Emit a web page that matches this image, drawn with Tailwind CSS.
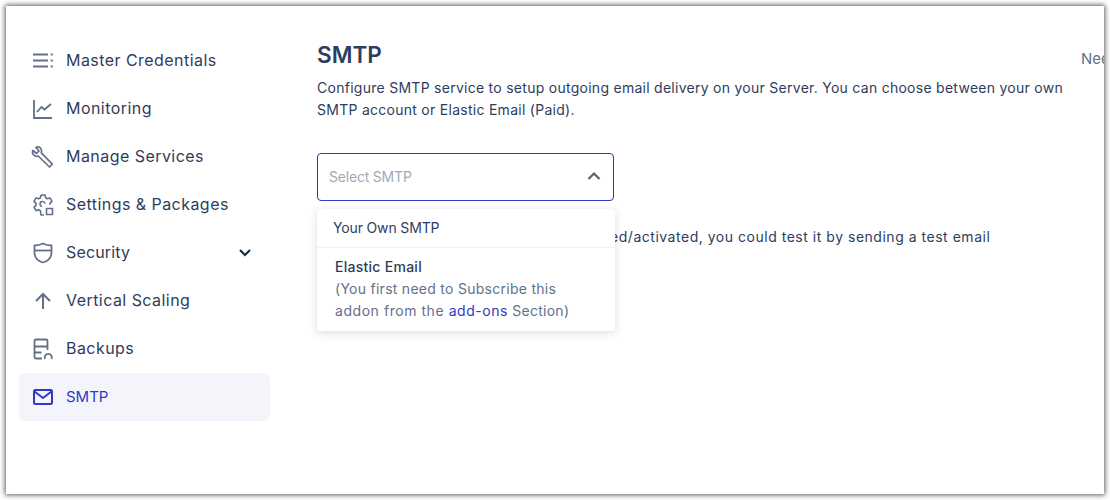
<!DOCTYPE html>
<html lang="en">
<head>
  <meta charset="UTF-8" />
  <meta name="viewport" content="width=device-width, initial-scale=1.0" />
  <title>SMTP</title>
  <script src="https://cdn.jsdelivr.net/npm/@tailwindcss/browser@4"></script>
</head>
<body class="bg-white font-['Inter',sans-serif]">
  <div class="h-[500px] w-[1110px] p-[6px]">
    <div class="flex h-[488px] w-[1098px] overflow-hidden bg-white shadow-[0_0_5px_1px_rgba(0,0,0,0.65)]">

      <!-- sidebar -->
      <nav class="w-[264px] shrink-0 pl-[13px] pt-[31px] text-[16px] tracking-[0.45px] text-[#2e3d5c]">
        <a class="flex h-12 w-[251px] items-center rounded-md pl-[12px]">
          <svg class="mr-[11px] h-[24px] w-[24px] shrink-0 text-[#64708a]" viewBox="0 0 24 24" fill="none" stroke="currentColor" stroke-width="2"><path d="M2 5.500h15M2 11.500h15M2 17.500h15" /><path d="M20.700 4.500v2M20.700 10.500v2M20.700 16.500v2" /></svg>
          <span class="pb-[2px]">Master Credentials</span>
        </a>
        <a class="flex h-12 w-[251px] items-center rounded-md pl-[12px]">
          <svg class="mr-[11px] h-[24px] w-[24px] shrink-0 text-[#64708a]" viewBox="0 0 24 24" fill="none" stroke="currentColor" stroke-width="1.800"><path d="M3 3v18h18" /><path d="M6 15l4.500-5 3 2.500L20 7" /></svg>
          <span class="pb-[2px]">Monitoring</span>
        </a>
        <a class="flex h-12 w-[251px] items-center rounded-md pl-[12px]">
          <svg class="mr-[11px] h-[24px] w-[24px] shrink-0 text-[#64708a]" viewBox="0 0 24 24" fill="none" stroke="currentColor" stroke-width="1.700" stroke-linejoin="round"><path d="M9 2.500c-1.500-.800-3-.800-4 0l3 3.500-2.500 2.500L2 5.500c-.800 1.500-.500 3.300.700 4.500 1.200 1.200 3 1.500 4.500 1l11.300 11 2.800-2.800-11-11.300c.500-1.800.100-4-1.300-5.400z" /></svg>
          <span class="pb-[2px]">Manage Services</span>
        </a>
        <a class="flex h-12 w-[251px] items-center rounded-md pl-[12px]">
          <svg class="mr-[11px] h-[24px] w-[24px] shrink-0 text-[#64708a]" viewBox="0 0 24 24" fill="none" stroke="currentColor" stroke-width="1.600" stroke-linejoin="round"><path d="M11 13.500a2.500 2.500 0 1 1 3-3M10 2h4l.600 2.800 1.700 1 2.700-.900 2 3.500-2 1.800v1.500M10 2l-.600 2.800-1.700 1-2.700-.900-2 3.500 2 1.900v2l-2 1.900 2 3.500 2.700-.900 1.700 1L10 22h3" /><rect x="15.500" y="15.500" width="6" height="6" /></svg>
          <span class="pb-[2px]">Settings &amp; Packages</span>
        </a>
        <a class="flex h-12 w-[251px] items-center rounded-md pl-[12px] tracking-[0.15px]">
          <svg class="mr-[11px] h-[24px] w-[24px] shrink-0 text-[#64708a]" viewBox="0 0 24 24" fill="none" stroke="currentColor" stroke-width="1.800" stroke-linejoin="round"><path d="M12 2.500c3 1.600 5.500 2 8.500 2v7c0 5-3.500 8.500-8.500 10-5-1.500-8.500-5-8.500-10v-7c3 0 5.500-.400 8.500-2z" /><path d="M3.500 9.500h17" /></svg>
          <span class="pb-[2px]">Security</span>
          <svg class="ml-auto mr-[16px] h-[18px] w-[18px] text-[#1f2d4a]" viewBox="0 0 18 18" fill="none" stroke="currentColor" stroke-width="2.200"><path d="M4 6l5 5 5-5" /></svg>
        </a>
        <a class="flex h-12 w-[251px] items-center rounded-md pl-[12px]">
          <svg class="mr-[11px] h-[24px] w-[24px] shrink-0 text-[#64708a]" viewBox="0 0 24 24" fill="none" stroke="currentColor" stroke-width="2"><path d="M12 20V5M5 12l7-7 7 7" /></svg>
          <span class="pb-[2px]">Vertical Scaling</span>
        </a>
        <a class="flex h-12 w-[251px] items-center rounded-md pl-[12px]">
          <svg class="mr-[11px] h-[24px] w-[24px] shrink-0 text-[#64708a]" viewBox="0 0 24 24" fill="none" stroke="currentColor" stroke-width="1.800" stroke-linejoin="round"><path d="M11 21.500H5a1.500 1.500 0 0 1-1.500-1.500V4A1.500 1.500 0 0 1 5 2.500h10A1.500 1.500 0 0 1 16.500 4v9" /><path d="M3.500 9.500h13M3.500 15.500h7" /><path d="M14 22a3.600 3.600 0 1 1 6.500 0" /></svg>
          <span class="pb-[2px]">Backups</span>
        </a>
        <a class="flex h-12 w-[251px] items-center rounded-md bg-[#f4f5fb] pl-[12px] text-[15px] tracking-normal text-[#3038c4]">
          <svg class="mr-[11px] h-[24px] w-[24px] shrink-0" viewBox="0 0 24 24" fill="none" stroke="currentColor" stroke-width="2" stroke-linejoin="round"><rect x="3" y="5" width="18" height="14" rx="1.500" /><path d="M3.500 6.500L12 13l8.500-6.500" /></svg>
          SMTP
        </a>
      </nav>

      <!-- main content -->
      <main class="w-[811px] shrink-0 pl-[47px] pt-[33px]">
        <h1 class="text-[22.5px] font-semibold leading-[32px] text-[#2e3d5c]">SMTP</h1>
        <p class="mt-[6px] w-[760px] text-[14px] leading-[22px] tracking-[0.27px] text-[#2e3d5c]">Configure SMTP service to setup outgoing email delivery on your Server. You can choose between your own SMTP account or Elastic Email (Paid).</p>

        <div class="relative mt-[32px] w-[297px]">
          <div class="flex h-[48px] items-center justify-between rounded-[4px] border border-[#3038c4] pl-[11px] pr-[11px]">
            <span class="pb-[1px] text-[14px] tracking-[-0.2px] text-[#a3a9b8]">Select SMTP</span>
            <svg class="h-[16px] w-[16px] text-[#5f5f5f]" viewBox="0 0 16 16" fill="none" stroke="currentColor" stroke-width="2.200"><path d="M2.500 10L8 4.500l5.500 5.500" /></svg>
          </div>
          <div class="absolute left-0 top-[56px] z-10 w-[298px] rounded-[4px] bg-white text-[14px] leading-[22px] text-[#2e3d5c] shadow-[0_2px_10px_rgba(40,50,80,0.16)]">
            <div class="h-[39px] border-b border-[#eef0f4] pl-[16px] pt-[8px] tracking-[-0.15px]">Your Own SMTP</div>
            <div class="px-[18px] pb-[9px] pt-[8px] tracking-[0.27px] text-[#64708a]">
              <div class="font-medium text-[#2e3d5c]">Elastic Email</div>
              <div>(You first need to Subscribe this<br /><span class="tracking-[0.55px]">addon from the <a class="text-[#3038c4]">add-ons</a></span> Section)</div>
            </div>
          </div>
        </div>

        <p class="mt-[25px] w-[740px] text-[14px] leading-[22px] tracking-[0.52px] text-[#2e3d5c]">Once the SMTP server has been configured/activated, you could test it by sending a test email</p>
      </main>

      <aside class="shrink-0 pt-[42px] text-[15px] text-[#64708a] whitespace-nowrap">Need Help?</aside>
    </div>
  </div>
</body>
</html>
